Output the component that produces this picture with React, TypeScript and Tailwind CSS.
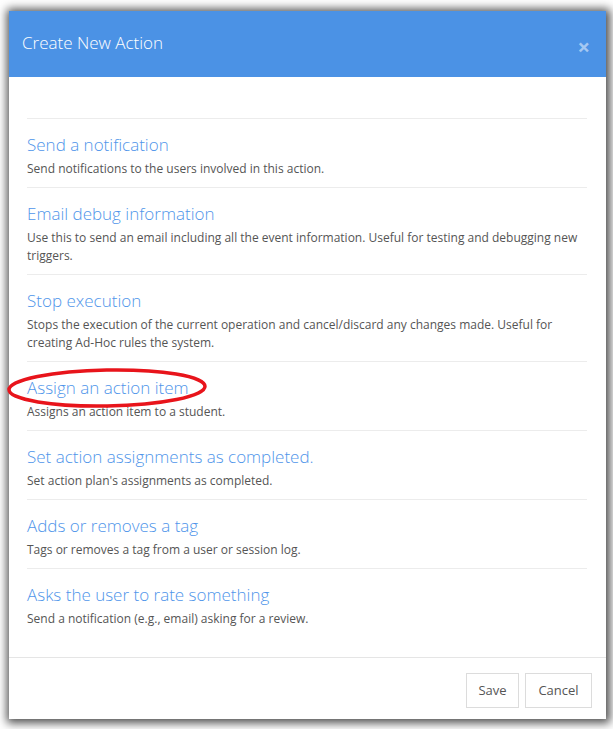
const actions = [
  { title: "Send a notification", desc: "Send notifications to the users involved in this action." },
  {
    title: "Email debug information",
    desc: "Use this to send an email including all the event information. Useful for testing and debugging new triggers.",
  },
  {
    title: "Stop execution",
    desc: "Stops the execution of the current operation and cancel/discard any changes made. Useful for creating Ad-Hoc rules the system.",
  },
  { title: "Assign an action item", desc: "Assigns an action item to a student." },
  { title: "Set action assignments as completed.", desc: "Set action plan's assignments as completed." },
  { title: "Adds or removes a tag", desc: "Tags or removes a tag from a user or session log." },
  { title: "Asks the user to rate something", desc: "Send a notification (e.g., email) asking for a review." },
];

const ActionRow = ({ title, desc }: { title: string; desc: string }) => {
  return (
    <div className="border-t border-[#ececec] pt-[14px] pb-[9px]">
      <a className="block text-[17px] leading-[24px] font-light text-[#4f95ea] cursor-pointer">{title}</a>
      <p className="mt-[3px] text-[12px] leading-[18px] text-[#555]">{desc}</p>
    </div>
  );
};

export default function App() {
  return (
    <div
      className="relative w-[613px] h-[729px] bg-white pt-[11px] pl-[9px]"
      style={{ fontFamily: '"Open Sans", "Liberation Sans", sans-serif' }}
    >
      <div className="w-[597px] h-[708px] flex flex-col bg-white shadow-[1px_1px_9px_3px_rgba(0,0,0,0.7)]">
        <div className="h-[66px] bg-[#4b92e5] flex items-center justify-between pl-[13px] pr-[16px]">
          <h1 className="text-[17px] font-light text-white -mt-[3px]">Create New Action</h1>
          <span className="text-white/50 text-[22px] font-bold leading-none mt-[3px]">×</span>
        </div>

        <div className="flex-1 pt-[41px] pl-[18px] pr-[19px]">
          {actions.map((a) => (
            <ActionRow key={a.title} title={a.title} desc={a.desc} />
          ))}
        </div>

        <div className="h-[62px] border-t border-[#e5e5e5] flex items-start justify-end gap-[6px] pt-[15px] pr-[14px]">
          <button className="w-[53px] h-[35px] border border-[#dcdcdc] bg-white text-[13px] text-[#555]">Save</button>
          <button className="w-[67px] h-[35px] border border-[#dcdcdc] bg-white text-[13px] text-[#555]">Cancel</button>
        </div>
      </div>

      {/* red annotation ring */}
      <svg className="absolute left-[6px] top-[367px]" width="202" height="42" viewBox="0 0 202 42">
        <ellipse cx="101" cy="21" rx="98" ry="18" fill="none" stroke="#e8141b" strokeWidth="3.5" transform="rotate(-1 101 21)" />
      </svg>
    </div>
  );
}
